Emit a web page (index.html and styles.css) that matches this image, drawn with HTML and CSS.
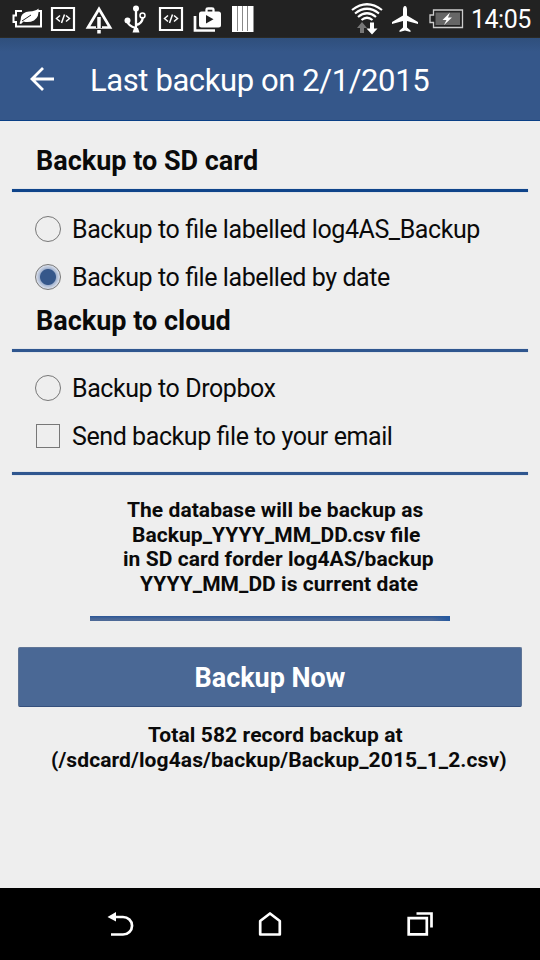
FILE: index.html
```html
<!DOCTYPE html>
<html lang="en">
<head>
<meta charset="utf-8">
<title>Backup</title>
<link rel="stylesheet" href="styles.css">
</head>
<body>
<div class="status">
  <svg width="47" height="38" viewBox="0 0 47 38"><path d="M22 11H16V15.500H13.500V22H16V26.500H41V11H38" fill="none" stroke="#fff" stroke-width="2"/><path d="M19.500 23.500Q21 20 21 17Q22.500 12 29 11.500Q36 11 38.500 8.500Q39.500 17 34 20.500Q29 23 23.500 21.500L21 24Z" fill="#fff"/><path d="M22 21L31 15" stroke="#222" stroke-width="1"/></svg>
  <svg width="33" height="38" viewBox="47 0 33 38"><path d="M52 8H74V30H52Z" fill="none" stroke="#fff" stroke-width="2.200"/><path d="M60 15.500L56.500 18.500L60 21.500M66 15.500L69.500 18.500L66 21.500M64.500 14.500L61.500 23" fill="none" stroke="#fff" stroke-width="1.500"/></svg>
  <svg width="38" height="38" viewBox="80 0 38 38"><path d="M99 9L88 27.500H110Z" fill="none" stroke="#fff" stroke-width="2.700"/><path d="M99 17V28M99 30.500V33.500" stroke="#222" stroke-width="6"/><path d="M99 17V28M99 30V33.500" stroke="#fff" stroke-width="3.500"/></svg>
  <svg width="34" height="38" viewBox="118 0 34 38"><path d="M136 10V29M136 28Q128 26 127.500 21M136 25Q142 24 143 17" fill="none" stroke="#fff" stroke-width="2.300"/><circle cx="136" cy="8.500" r="3" fill="#fff"/><circle cx="127.500" cy="20.500" r="3" fill="#fff"/><circle cx="142.500" cy="15.500" r="2.500" fill="none" stroke="#fff" stroke-width="1.500"/><path d="M132.500 32.500L134 28H138L139.500 32.500Z" fill="#fff"/></svg>
  <svg width="33" height="38" viewBox="152 0 33 38"><path d="M160 8H182V30H160Z" fill="none" stroke="#fff" stroke-width="2.200"/><path d="M168 15.500L164.500 18.500L168 21.500M174 15.500L177.500 18.500L174 21.500M172.500 14.500L169.500 23" fill="none" stroke="#fff" stroke-width="1.500"/></svg>
  <svg width="43" height="38" viewBox="185 0 43 38"><path d="M195 16V30.500H215" fill="none" stroke="#fff" stroke-width="2.700"/><path d="M206.500 12V9.500Q206.500 8.500 208 8.500H212Q213.500 8.500 213.500 9.500V12" fill="none" stroke="#fff" stroke-width="2.300"/><rect x="199" y="11.500" width="22" height="16" rx="2.500" fill="#fff"/><path d="M206 15V23.500L213.500 19.200Z" fill="#222"/></svg>
  <svg width="34" height="38" viewBox="228 0 34 38"><path d="M232 6H253.500V32H232Z" fill="#fff"/><path d="M237.500 6V31M242.500 6V31M247.500 6V31" stroke="#888" stroke-width="1"/></svg>
  <span class="grow"></span>
  <svg width="42" height="38" viewBox="346 0 42 38"><g fill="none" stroke="#fff" stroke-width="2.200"><path d="M352 10Q367 -1.500 382 10"/><path d="M355 13.500Q367 4 379 13.500"/><path d="M358 17Q367 9.500 376 17"/><path d="M361.500 20Q367 15.500 372.500 20"/></g><path d="M362 22L357 28H360V33H364V28H367Z" fill="#777"/><path d="M372 34.500L377.500 28.500H374V22.500H370V28.500H366.500Z" fill="#fff"/></svg>
  <svg width="38" height="38" viewBox="388 0 38 38"><path d="M405 6C403.500 6 403 8 403 10V15.500L392 22V24L403 21V27.500L399.500 30.500V32L405 30.500L410.500 32V30.500L407 27.500V21L418 24V22L407 15.500V10C407 8 406.500 6 405 6Z" fill="#fff"/></svg>
  <svg width="42" height="38" viewBox="426 0 42 38"><path d="M433.500 10H462.500V27.500H433.500V22.500H430V15H433.500Z" fill="#222" stroke="#ccc" stroke-width="1.300"/><path d="M435.500 12.500H460V25H435.500Z" fill="#666"/><path d="M450 12.500L442.500 20H446.500L444 25L452 17.500H448Z" fill="#fff"/></svg>
  <span class="time">14:05</span>
</div>
<header class="bar">
  <svg class="back" width="26" height="26" viewBox="29 67 26 26"><path d="M54 80H32M43 69L32 80L43 91" fill="none" stroke="#fff" stroke-width="2.800"/></svg>
  <h1>Last backup on 2/1/2015</h1>
</header>
<main>
  <h2 class="sd">Backup to SD card</h2>
  <div class="rule first"></div>
  <div class="options">
    <div class="option"><span class="radio"></span><span>Backup to file labelled log4AS_Backup</span></div>
    <div class="option"><span class="radio on"></span><span>Backup to file labelled by date</span></div>
  </div>
  <h2 class="cloud">Backup to cloud</h2>
  <div class="rule"></div>
  <div class="options second">
    <div class="option"><span class="radio"></span><span>Backup to Dropbox</span></div>
    <div class="option"><span class="check"></span><span>Send backup file to your email</span></div>
  </div>
  <div class="rule last"></div>
  <p class="note"><span class="n1">The database will be backup as</span><span class="n2">Backup_YYYY_MM_DD.csv file</span><span class="n3">in SD card forder log4AS/backup</span><span class="n4">YYYY_MM_DD is current date</span></p>
  <div class="progress"></div>
  <button>Backup Now</button>
  <p class="note result"><span class="r1">Total 582 record backup at</span><span class="r2">(/sdcard/log4as/backup/Backup_2015_1_2.csv)</span></p>
</main>
<nav>
  <svg width="30" height="30" viewBox="105 909 30 30"><path d="M113 917H123A9 8.700 0 0 1 123 934.500H111" fill="none" stroke="#fff" stroke-width="2.700"/><path d="M107.500 917L116 912V921.500Z" fill="#fff"/></svg>
  <svg width="30" height="30" viewBox="255 909 30 30"><path d="M260.200 921L270 913.500L279.800 921V934.500H260.200Z" fill="none" stroke="#fff" stroke-width="2.700" stroke-linejoin="round"/></svg>
  <svg width="30" height="30" viewBox="405 909 30 30"><path d="M408.700 918.200H426.800V934.300H408.700Z M416.500 913.500H431.500V927.500" fill="none" stroke="#fff" stroke-width="2.700"/></svg>
</nav>
</body>
</html>
```
FILE: styles.css
```css
* { box-sizing: border-box; margin: 0; padding: 0; }
body { width: 540px; height: 960px; display: flex; flex-direction: column; background: #eee; color: #0a0a0a; font-family: Roboto, sans-serif; font-feature-settings: "liga" 1; overflow: hidden; }
.status { height: 38px; background: #222; display: flex; flex: none; border-bottom: 1px solid #2b2a25; }
.status svg { flex: none; }
.grow { flex: 1; }
.time { width: 72px; padding-left: 3px; font-size: 25px; line-height: 40px; letter-spacing: -0.5px; color: #fff; white-space: nowrap; }
.bar { height: 83px; flex: none; display: flex; align-items: center; padding-left: 29px; background: linear-gradient(#2f4f7c, #35578a 14px); border-bottom: 1px solid #0a3f86; color: #fff; }
.back { margin-right: 35px; }
h1 { font-size: 31px; font-weight: 400; line-height: 36px; letter-spacing: -0.4px; white-space: nowrap; padding-top: 3px; }
main { flex: 1; padding: 0 12px; }
h2 { padding-left: 24px; font-size: 27px; font-weight: 700; line-height: 32px; white-space: nowrap; }
.sd { margin-top: 24px; }
.cloud { margin-top: 5px; }
.rule { height: 3px; margin-top: 12px; background: #2f568f; box-shadow: 0 0 1px #7d9abf; }
.first { background: #0f448a; }
.options { height: 108px; padding: 13px 0 0 23px; }
.second { padding-top: 12px; }
.option { height: 48px; display: flex; align-items: center; font-size: 25px; letter-spacing: -0.42px; white-space: nowrap; }
.radio { width: 26px; height: 26px; margin-right: 11px; border: 1px solid #777; border-radius: 50%; flex: none; }
.on { background: radial-gradient(circle, #35578a 0 7.500px, #a4b4d0 8.500px, #dde2ec 12px); }
.check { width: 24px; height: 24px; margin: 0 12px 0 1px; border: 1px solid #777; flex: none; }
.last { margin-top: 12px; }
.note { margin-top: 23px; font-size: 21px; font-weight: 700; line-height: 24.500px; letter-spacing: 0.05px; }
.note span { display: block; width: max-content; white-space: nowrap; }
.n1 { margin-left: 115px; }
.n2 { margin-left: 120px; }
.n3 { margin-left: 111px; }
.n4 { margin-left: 128px; }
.progress { width: 360px; height: 5px; margin: 20px auto 0; background: linear-gradient(90deg, transparent 95%, #2458a0), linear-gradient(#2a5596, #4d6997 60%); }
button { display: block; width: 504px; height: 60px; margin: 26px 0 0 6px; padding-top: 2px; border: 1px solid #5f7596; border-bottom-color: #344f7c; border-radius: 2px; background: #4a6895; color: #fff; font: 700 27px Roboto, sans-serif; letter-spacing: -0.05px; }
.result { margin-top: 16px; letter-spacing: 0.1px; }
.r1 { margin-left: 136px; }
.r2 { margin-left: 39px; }
nav { height: 72px; flex: none; background: #000; display: flex; gap: 120px; padding: 21px 0 0 105px; }
```
